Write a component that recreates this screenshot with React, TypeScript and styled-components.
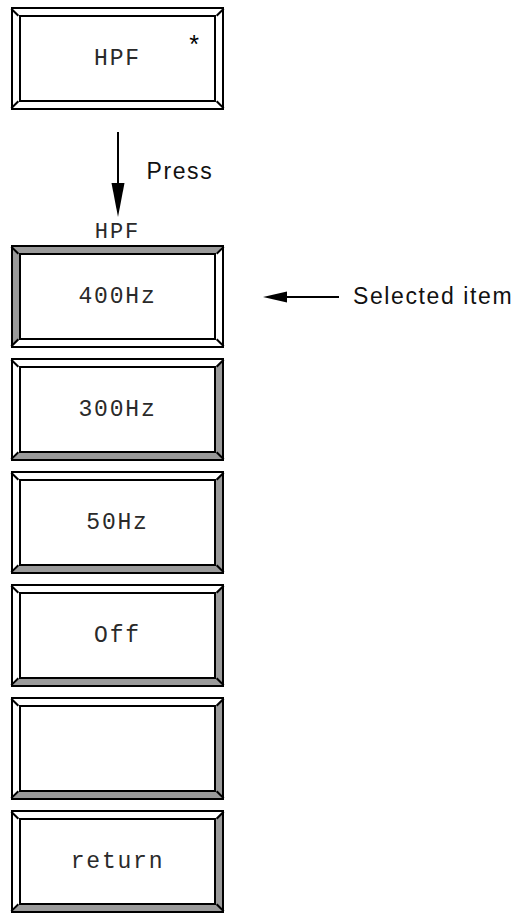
import styled, { createGlobalStyle } from 'styled-components';

const GlobalStyle = createGlobalStyle`
  html, body {
    margin: 0;
    padding: 0;
    background: #ffffff;
  }
`;

type Bevel = 'flat' | 'raised' | 'pressed';

const LIGHT = '#ffffff';
const SHADE = '#9a9a9a';

const bevelColors = (b: Bevel) => {
  if (b === 'raised') return `${LIGHT} ${SHADE} ${SHADE} ${LIGHT}`;
  if (b === 'pressed') return `${SHADE} ${LIGHT} ${LIGHT} ${SHADE}`;
  return `${LIGHT} ${LIGHT} ${LIGHT} ${LIGHT}`;
};

const Page = styled.div`
  display: flex;
  flex-direction: column;
  padding: 7px 0 0 11px;
  width: 504px;
`;

// outer black rim of a soft key
const Key = styled.div`
  position: relative;
  box-sizing: border-box;
  width: 213px;
  height: 103px;
  border: 2px solid #000;
  flex-shrink: 0;

  /* corner mitres, drawn as short diagonal strokes */
  &::before,
  &::after {
    content: '';
    position: absolute;
    width: 10px;
    height: 2px;
    background: #000;
    z-index: 2;
  }
  &::before {
    top: -1px;
    left: -1px;
    transform-origin: 0 0;
    transform: rotate(45deg);
  }
  &::after {
    bottom: -1px;
    right: -1px;
    transform-origin: 100% 100%;
    transform: rotate(45deg);
  }
`;

const BevelRing = styled.div<{ $bevel: Bevel }>`
  position: relative;
  box-sizing: border-box;
  height: 100%;
  border-style: solid;
  border-width: 6px;
  border-color: ${(p) => bevelColors(p.$bevel)};

  &::before,
  &::after {
    content: '';
    position: absolute;
    width: 10px;
    height: 2px;
    background: #000;
    z-index: 2;
  }
  &::before {
    top: -7px;
    right: -7px;
    transform-origin: 100% 0;
    transform: rotate(-45deg);
  }
  &::after {
    bottom: -7px;
    left: -7px;
    transform-origin: 0 100%;
    transform: rotate(-45deg);
  }
`;

const Face = styled.div`
  position: relative;
  box-sizing: border-box;
  height: 100%;
  border: 2px solid #000;
  background: #fff;
  display: flex;
  align-items: center;
  justify-content: center;
  font-family: 'Liberation Mono', 'Courier New', monospace;
  font-size: 23px;
  letter-spacing: 1.8px;
  color: #2a2a2a;
`;

const Star = styled.span`
  position: absolute;
  top: 15px;
  right: 15px;
  font-family: 'Liberation Sans', Arial, sans-serif;
  font-size: 25px;
  line-height: 25px;
  letter-spacing: 0;
  color: #000;
`;

const PressStep = styled.div`
  display: grid;
  grid-template-columns: 1fr 16px 1fr;
  grid-template-rows: auto 1fr;
  width: 213px;
  height: 135px;
  box-sizing: border-box;
  padding-top: 22px;
`;

const DownArrow = styled.svg`
  grid-column: 2;
  grid-row: 1;
  display: block;
`;

const Note = styled.span`
  font-family: 'Liberation Sans', Arial, Helvetica, sans-serif;
  font-size: 23px;
  letter-spacing: 1.6px;
  color: #111;
  white-space: nowrap;
`;

const PressNote = styled(Note)`
  grid-column: 3;
  grid-row: 1;
  align-self: center;
  margin: 0 0 6px 21px;
`;

const MenuTitle = styled.div`
  grid-column: 1 / 4;
  grid-row: 2;
  align-self: end;
  text-align: center;
  font-family: 'Liberation Mono', 'Courier New', monospace;
  font-size: 22px;
  letter-spacing: 2px;
  line-height: 24px;
  color: #2a2a2a;
`;

const KeyList = styled.div`
  display: flex;
  flex-direction: column;
  gap: 10px;
`;

const KeyRow = styled.div`
  display: flex;
  align-items: center;
`;

const Callout = styled.div`
  display: flex;
  align-items: center;
  gap: 14px;
  margin-left: 39px;
`;

const SoftKey = ({ label, bevel, star }: { label?: string; bevel: Bevel; star?: boolean }) => (
  <Key>
    <BevelRing $bevel={bevel}>
      <Face>
        {label}
        {star && <Star>*</Star>}
      </Face>
    </BevelRing>
  </Key>
);

const items = ['400Hz', '300Hz', '50Hz', 'Off', '', 'return'];

export default function App() {
  return (
    <>
      <GlobalStyle />
      <Page>
        <SoftKey label="HPF" bevel="flat" star />
        <PressStep>
          <DownArrow width="16" height="85" viewBox="0 0 16 85">
            <line x1="8" y1="0" x2="8" y2="56" stroke="#000" strokeWidth="2" />
            <polygon points="1.5,51 14.5,51 8,85" fill="#000" />
          </DownArrow>
          <PressNote>Press</PressNote>
          <MenuTitle>HPF</MenuTitle>
        </PressStep>
        <KeyList>
          {items.map((label, i) => (
            <KeyRow key={i}>
              <SoftKey label={label} bevel={i === 0 ? 'pressed' : 'raised'} />
              {i === 0 && (
                <Callout>
                  <svg width="76" height="14" viewBox="0 0 76 14">
                    <polygon points="0,7 24,1.5 24,12.5" fill="#000" />
                    <line x1="20" y1="7" x2="76" y2="7" stroke="#000" strokeWidth="2" />
                  </svg>
                  <Note>Selected item</Note>
                </Callout>
              )}
            </KeyRow>
          ))}
        </KeyList>
      </Page>
    </>
  );
}
